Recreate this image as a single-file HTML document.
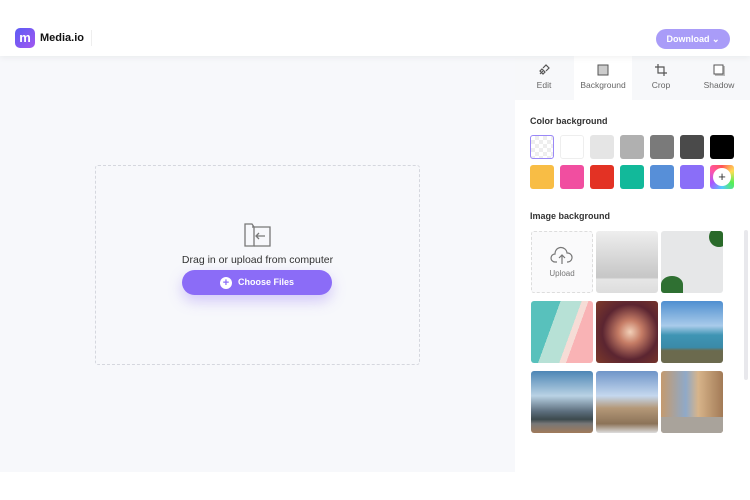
<!DOCTYPE html><html><head><style>
*{margin:0;padding:0;box-sizing:border-box}
body{width:750px;height:500px;position:relative;overflow:hidden;font-family:"Liberation Sans",sans-serif;background:#fff}
.a{position:absolute}
.sw{position:absolute;width:24px;height:24px;border-radius:3px}
.im{position:absolute;width:62px;height:62px;border-radius:3px;overflow:hidden}
.tab{position:absolute;top:56px;height:44px;width:58px;text-align:center;font-size:8.5px;color:#666}
.tab svg{display:block;margin:8px auto 4px}
</style></head><body>
<div class="a" style="left:0;top:0;width:750px;height:56px;background:#fff;box-shadow:0 2px 6px rgba(0,0,0,.05);z-index:2"></div>
<div class="a" style="left:15px;top:28px;width:20px;height:20px;border-radius:5px;background:linear-gradient(135deg,#5b5cf5,#a256f0);z-index:3;color:#fff;font-weight:bold;font-size:13px;text-align:center;line-height:19px">m</div>
<div class="a" style="left:40px;top:32px;font-size:11px;font-weight:bold;color:#111;z-index:3">Media.io</div>
<div class="a" style="left:91px;top:30px;width:1px;height:16px;background:#eee;z-index:3"></div>
<div class="a" style="left:656px;top:29px;width:74px;height:20px;border-radius:10px;background:#a99cf8;color:#fff;font-size:9px;font-weight:bold;text-align:center;line-height:20px;z-index:3">Download ⌄</div>
<div class="a" style="left:0;top:56px;width:515px;height:416px;background:#f7f8fb"></div>
<div class="a" style="left:95px;top:165px;width:325px;height:200px;border:1px dashed #d5d7de;border-radius:3px"></div>
<svg class="a" style="left:243px;top:222px" width="30" height="26" viewBox="0 0 30 26" fill="none" stroke="#777" stroke-width="1.3"><path d="M2 2h7l2 3v19H2z"/><path d="M9 5h18v19H11"/><path d="M22 14h-9m3-3l-3 3 3 3"/></svg>
<div class="a" style="left:95px;top:254px;width:325px;text-align:center;font-size:10.5px;color:#333">Drag in or upload from computer</div>
<div class="a" style="left:182px;top:270px;width:150px;height:25px;border-radius:13px;background:#8b6cf7;box-shadow:0 6px 14px rgba(139,108,247,.35);color:#fff;font-size:9px;font-weight:bold;line-height:25px;text-align:center"><span style="display:inline-block;width:12px;height:12px;border-radius:50%;background:#fff;color:#8b6cf7;line-height:12px;font-size:11px;margin-right:6px;vertical-align:middle">+</span>Choose Files</div>
<div class="a" style="left:515px;top:56px;width:235px;height:44px;background:#f7f8fa"></div>
<div class="tab" style="left:515px"><svg width="12" height="12" viewBox="0 0 12 12" fill="none" stroke="#555" stroke-width="1.2"><path d="M2 10l3-3M5 4l3-3 3 3-3 3M4 5l3 3-2 2-3-3z"/></svg>Edit</div>
<div class="tab" style="left:574px;background:#fff"><svg width="12" height="12"><rect x="1" y="1" width="10" height="10" fill="#ccc" stroke="#555"/></svg>Background</div>
<div class="tab" style="left:632px"><svg width="12" height="12" fill="none" stroke="#555" stroke-width="1.2"><path d="M3 0v9h9M0 3h9v9"/></svg>Crop</div>
<div class="tab" style="left:690px"><svg width="12" height="12"><rect x="2" y="2" width="10" height="10" fill="#bbb"/><rect x="1" y="1" width="9" height="9" fill="#fff" stroke="#555"/></svg>Shadow</div>
<div class="a" style="left:530px;top:116px;font-size:9px;font-weight:bold;color:#333">Color background</div>
<div class="sw" style="left:530px;top:135px;border:1.5px solid #9a88f7;background:repeating-conic-gradient(#eee 0 25%,#fff 0 50%) 0 0/8px 8px"></div>
<div class="sw" style="left:560px;top:135px;background:#fff;border:1px solid #eee"></div>
<div class="sw" style="left:590px;top:135px;background:#e5e5e5"></div>
<div class="sw" style="left:620px;top:135px;background:#b0b0b0"></div>
<div class="sw" style="left:650px;top:135px;background:#7a7a7a"></div>
<div class="sw" style="left:680px;top:135px;background:#4a4a4a"></div>
<div class="sw" style="left:710px;top:135px;background:#000"></div>
<div class="sw" style="left:530px;top:165px;background:#f8bd45"></div>
<div class="sw" style="left:560px;top:165px;background:#f14ea0"></div>
<div class="sw" style="left:590px;top:165px;background:#e33224"></div>
<div class="sw" style="left:620px;top:165px;background:#12b99a"></div>
<div class="sw" style="left:650px;top:165px;background:#578fd8"></div>
<div class="sw" style="left:680px;top:165px;background:#8a6ef8"></div>
<div class="sw" style="left:710px;top:165px;background:conic-gradient(#f55,#fd5,#5e5,#5cf,#a5f,#f5a,#f55)"><div style="margin:3px;width:18px;height:18px;border-radius:50%;background:#fff;text-align:center;line-height:18px;font-size:13px;color:#333">+</div></div>
<div class="a" style="left:530px;top:211px;font-size:9px;font-weight:bold;color:#333">Image background</div>
<div class="im" style="left:531px;top:231px;border:1px dashed #ddd;background:#fafafb;text-align:center;font-size:8px;color:#777"><svg width="24" height="20" viewBox="0 0 24 20" fill="none" stroke="#777" stroke-width="1.2" style="display:block;margin:14px auto 3px"><path d="M7 16H5a4 4 0 010-8 6 6 0 0112-1 4 4 0 011 9h-1M12 18V9m-3 3l3-3 3 3"/></svg>Upload</div>
<div class="im" style="left:596px;top:231px;background:linear-gradient(#eee,#c6c6c6 75%,#e6e6e6 78%,#ddd)"></div>
<div class="im" style="left:661px;top:231px;background:#e6e7e8"><div style="position:absolute;right:-6px;top:-4px;width:20px;height:20px;border-radius:50%;background:#2a6a2a"></div><div style="position:absolute;left:0;bottom:0;width:22px;height:17px;border-radius:50% 50% 0 0;background:#2f7032"></div></div>
<div class="im" style="left:531px;top:301px;background:linear-gradient(110deg,#58c1bc 0 35%,#b7e1d6 35% 60%,#f6dcd6 60% 68%,#f9b3b5 68%)"></div>
<div class="im" style="left:596px;top:301px;background:radial-gradient(circle at 55% 50%,#f2d0b8 0,#c67d66 25%,#5b2531 60%,#7e3a2a)"></div>
<div class="im" style="left:661px;top:301px;background:linear-gradient(#4f8fd0,#a9cbea 40%,#3f95b4 55%,#3a8aa8 75%,#6b6a4e 80%)"></div>
<div class="im" style="left:531px;top:371px;background:linear-gradient(#4d86b5,#b9d2e4 40%,#5d6f7e 65%,#3c4a4e 78%,#777 85%,#a07a5a)"></div>
<div class="im" style="left:596px;top:371px;background:linear-gradient(#6f95c8,#c5d8ee 40%,#b49878 60%,#8c7358 85%,#ddd)"></div>
<div class="im" style="left:661px;top:371px;background:linear-gradient(90deg,#c49a6e,#8fa9c8 40%,#d7b48a 60%,#a27a56);"><div style="position:absolute;bottom:0;left:0;right:0;height:16px;background:#a9a39b"></div></div>
<div class="a" style="left:744px;top:230px;width:4px;height:150px;border-radius:2px;background:#e8e8ec"></div>
</body></html>
